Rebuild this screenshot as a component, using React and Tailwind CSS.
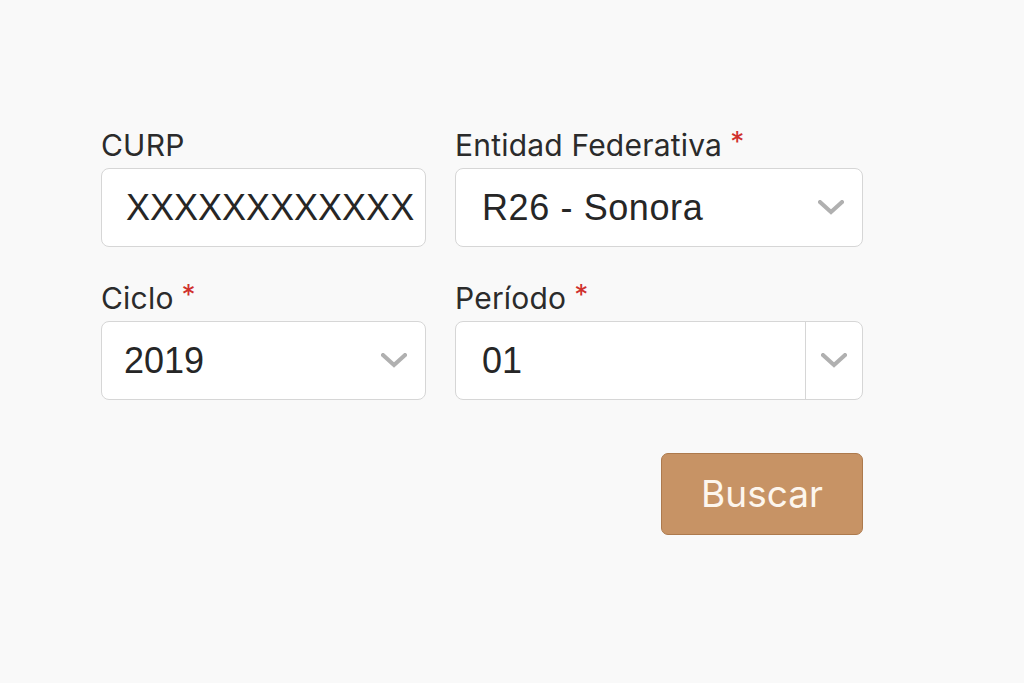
import { useState } from 'react'

const Chevron = () => (
  <svg width="26" height="15" viewBox="0 0 26 15" fill="none">
    <polyline points="2,2 13,12 24,2" stroke="#b0b0b0" strokeWidth="4" strokeLinecap="square" strokeLinejoin="miter" />
  </svg>
)

const Label = ({ children, required }) => (
  <div className="flex items-start h-[34px] leading-[34px] text-[30px] tracking-[0.2px] text-[#2b2b2b] mb-[6px] font-['Inter',sans-serif]">
    <span>{children}</span>
    {required && <span className="ml-[8px] text-[#d0312d] text-[28px] leading-[28px]">*</span>}
  </div>
)

const App = () => {
  const [curp, setCurp] = useState('XXXXXXXXXXXX')

  return (
    <div className="min-h-[683px] w-full bg-[#f9f9f9] pt-[128px] pl-[101px]" style={{ fontFamily: '"Liberation Sans", Arial, sans-serif' }}>
      <div className="w-[762px]">
        {/* Row 1 */}
        <div className="flex gap-[29px]">
          <div className="w-[325px]">
            <Label>CURP</Label>
            <div className="h-[79px] bg-white border border-[#d6d6d6] rounded-[8px] flex items-center pl-[24px] overflow-hidden">
              <input
                value={curp}
                onChange={(e) => setCurp(e.target.value)}
                className="w-full bg-transparent outline-none text-[36px] text-[#262626]"
              />
            </div>
          </div>
          <div className="w-[408px]">
            <Label required>Entidad Federativa</Label>
            <div className="h-[79px] bg-white border border-[#d6d6d6] rounded-[8px] flex items-center justify-between pl-[26px] pr-[18px]">
              <span className="text-[36px] text-[#262626] tracking-[0.6px]">R26 - Sonora</span>
              <Chevron />
            </div>
          </div>
        </div>

        {/* Row 2 */}
        <div className="flex gap-[29px] mt-[34px]">
          <div className="w-[325px]">
            <Label required>Ciclo</Label>
            <div className="h-[79px] bg-white border border-[#d6d6d6] rounded-[8px] flex items-center justify-between pl-[22px] pr-[18px]">
              <span className="text-[36px] text-[#262626]">2019</span>
              <Chevron />
            </div>
          </div>
          <div className="w-[408px]">
            <Label required>Período</Label>
            <div className="h-[79px] bg-white border border-[#d6d6d6] rounded-[8px] flex items-stretch">
              <div className="flex-1 flex items-center pl-[26px]">
                <span className="text-[36px] text-[#262626]">01</span>
              </div>
              <div className="w-[57px] border-l border-[#d6d6d6] flex items-center justify-center">
                <Chevron />
              </div>
            </div>
          </div>
        </div>

        {/* Button */}
        <div className="flex justify-end mt-[53px]">
          <button className="w-[202px] h-[82px] bg-[#c79365] border border-[#ad7a4d] rounded-[7px] text-[37px] text-[#fdf6ee] font-['Inter',sans-serif]">
            Buscar
          </button>
        </div>
      </div>
    </div>
  )
}

export default App
